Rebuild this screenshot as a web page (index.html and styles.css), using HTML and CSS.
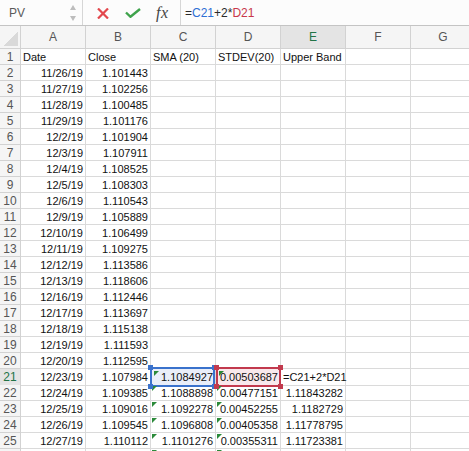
FILE: index.html
```html
<!DOCTYPE html>
<html>
<head>
<meta charset="utf-8">
<link rel="stylesheet" href="styles.css">
</head>
<body>
<div class="app">
  <div class="fbar">
    <div class="namebox">
      <span class="name">PV</span>
      <svg class="spin" width="8" height="18" viewBox="0 0 8 18"><path d="M4 1 L7 6 L1 6 Z" fill="#bdbdbd"/><path d="M1 12 L7 12 L4 17 Z" fill="#bdbdbd"/></svg>
    </div>
    <div class="tools">
      <svg class="x" width="12" height="11" viewBox="0 0 12 11"><path d="M1 0.5 L11 10.5 M11 0.5 L1 10.5" stroke="#e3484d" stroke-width="2.2" fill="none"/></svg>
      <svg class="ok" width="16" height="10" viewBox="0 0 16 10"><path d="M1 4.5 L5.5 8.8 L15 1" stroke="#3fa34c" stroke-width="2.4" fill="none"/></svg>
      <span class="fx">fx</span>
    </div>
    <div class="formula">=<span class="rb">C21</span>+2*<span class="rr">D21</span></div>
  </div>
  <div class="sheet">
    <div class="row hrow">
      <div class="c corner"><span class="tri"></span></div>
      <div class="c ch">A</div><div class="c ch">B</div><div class="c ch">C</div><div class="c ch">D</div><div class="c ch act">E</div><div class="c ch">F</div><div class="c ch">G</div>
    </div>
    <div class="row"><div class="c rh">1</div><div class="c">Date</div><div class="c">Close</div><div class="c">SMA (20)</div><div class="c">STDEV(20)</div><div class="c">Upper Band</div><div class="c"></div><div class="c"></div></div>
    <div class="row"><div class="c rh">2</div><div class="c n">11/26/19</div><div class="c n">1.101443</div><div class="c"></div><div class="c"></div><div class="c"></div><div class="c"></div><div class="c"></div></div>
    <div class="row"><div class="c rh">3</div><div class="c n">11/27/19</div><div class="c n">1.102256</div><div class="c"></div><div class="c"></div><div class="c"></div><div class="c"></div><div class="c"></div></div>
    <div class="row"><div class="c rh">4</div><div class="c n">11/28/19</div><div class="c n">1.100485</div><div class="c"></div><div class="c"></div><div class="c"></div><div class="c"></div><div class="c"></div></div>
    <div class="row"><div class="c rh">5</div><div class="c n">11/29/19</div><div class="c n">1.101176</div><div class="c"></div><div class="c"></div><div class="c"></div><div class="c"></div><div class="c"></div></div>
    <div class="row"><div class="c rh">6</div><div class="c n">12/2/19</div><div class="c n">1.101904</div><div class="c"></div><div class="c"></div><div class="c"></div><div class="c"></div><div class="c"></div></div>
    <div class="row"><div class="c rh">7</div><div class="c n">12/3/19</div><div class="c n">1.107911</div><div class="c"></div><div class="c"></div><div class="c"></div><div class="c"></div><div class="c"></div></div>
    <div class="row"><div class="c rh">8</div><div class="c n">12/4/19</div><div class="c n">1.108525</div><div class="c"></div><div class="c"></div><div class="c"></div><div class="c"></div><div class="c"></div></div>
    <div class="row"><div class="c rh">9</div><div class="c n">12/5/19</div><div class="c n">1.108303</div><div class="c"></div><div class="c"></div><div class="c"></div><div class="c"></div><div class="c"></div></div>
    <div class="row"><div class="c rh">10</div><div class="c n">12/6/19</div><div class="c n">1.110543</div><div class="c"></div><div class="c"></div><div class="c"></div><div class="c"></div><div class="c"></div></div>
    <div class="row"><div class="c rh">11</div><div class="c n">12/9/19</div><div class="c n">1.105889</div><div class="c"></div><div class="c"></div><div class="c"></div><div class="c"></div><div class="c"></div></div>
    <div class="row"><div class="c rh">12</div><div class="c n">12/10/19</div><div class="c n">1.106499</div><div class="c"></div><div class="c"></div><div class="c"></div><div class="c"></div><div class="c"></div></div>
    <div class="row"><div class="c rh">13</div><div class="c n">12/11/19</div><div class="c n">1.109275</div><div class="c"></div><div class="c"></div><div class="c"></div><div class="c"></div><div class="c"></div></div>
    <div class="row"><div class="c rh">14</div><div class="c n">12/12/19</div><div class="c n">1.113586</div><div class="c"></div><div class="c"></div><div class="c"></div><div class="c"></div><div class="c"></div></div>
    <div class="row"><div class="c rh">15</div><div class="c n">12/13/19</div><div class="c n">1.118606</div><div class="c"></div><div class="c"></div><div class="c"></div><div class="c"></div><div class="c"></div></div>
    <div class="row"><div class="c rh">16</div><div class="c n">12/16/19</div><div class="c n">1.112446</div><div class="c"></div><div class="c"></div><div class="c"></div><div class="c"></div><div class="c"></div></div>
    <div class="row"><div class="c rh">17</div><div class="c n">12/17/19</div><div class="c n">1.113697</div><div class="c"></div><div class="c"></div><div class="c"></div><div class="c"></div><div class="c"></div></div>
    <div class="row"><div class="c rh">18</div><div class="c n">12/18/19</div><div class="c n">1.115138</div><div class="c"></div><div class="c"></div><div class="c"></div><div class="c"></div><div class="c"></div></div>
    <div class="row"><div class="c rh">19</div><div class="c n">12/19/19</div><div class="c n">1.111593</div><div class="c"></div><div class="c"></div><div class="c"></div><div class="c"></div><div class="c"></div></div>
    <div class="row"><div class="c rh">20</div><div class="c n">12/20/19</div><div class="c n">1.112595</div><div class="c"></div><div class="c"></div><div class="c"></div><div class="c"></div><div class="c"></div></div>
    <div class="row"><div class="c rh act">21</div><div class="c n">12/23/19</div><div class="c n">1.107984</div><div class="c n tri-g selb"><span class="h tl"></span><span class="h tr"></span><span class="h bl"></span><span class="h br"></span>1.1084927</div><div class="c n tri-g selr"><span class="h tl"></span><span class="h tr"></span><span class="h bl"></span><span class="h br"></span>0.00503687</div><div class="c ovf">=C21+2*D21</div><div class="c"></div><div class="c"></div></div>
    <div class="row"><div class="c rh">22</div><div class="c n">12/24/19</div><div class="c n">1.109385</div><div class="c n tri-g">1.1088898</div><div class="c n tri-g">0.00477151</div><div class="c n">1.11843282</div><div class="c"></div><div class="c"></div></div>
    <div class="row"><div class="c rh">23</div><div class="c n">12/25/19</div><div class="c n">1.109016</div><div class="c n tri-g">1.1092278</div><div class="c n tri-g">0.00452255</div><div class="c n">1.1182729</div><div class="c"></div><div class="c"></div></div>
    <div class="row"><div class="c rh">24</div><div class="c n">12/26/19</div><div class="c n">1.109545</div><div class="c n tri-g">1.1096808</div><div class="c n tri-g">0.00405358</div><div class="c n">1.11778795</div><div class="c"></div><div class="c"></div></div>
    <div class="row"><div class="c rh">25</div><div class="c n">12/27/19</div><div class="c n">1.110112</div><div class="c n tri-g">1.1101276</div><div class="c n tri-g">0.00355311</div><div class="c n">1.11723381</div><div class="c"></div><div class="c"></div></div>
    <div class="row"><div class="c rh"></div><div class="c"></div><div class="c"></div><div class="c tri-g"></div><div class="c tri-g"></div><div class="c"></div><div class="c"></div><div class="c"></div></div>
  </div>
</div>
</body>
</html>
```
FILE: styles.css
```css
html, body {
  margin: 0;
  padding: 0;
  background: #ffffff;
  overflow: hidden;
}
.app {
  width: 469px;
  height: 451px;
  overflow: hidden;
  font-family: "Liberation Sans", Arial, sans-serif;
}
.fbar {
  display: flex;
  align-items: stretch;
  height: 25px;
  background: #fcfcfc;
  border-bottom: 1px solid #c4c4c4;
}
.namebox {
  width: 83px;
  display: flex;
  align-items: center;
  justify-content: space-between;
  padding: 0 5px 0 9px;
  box-sizing: border-box;
  border-right: 1px solid #d6d6d6;
}
.name {
  font-size: 12px;
  color: #5a5a5a;
}
.spin {
  display: block;
}
.tools {
  width: 98px;
  display: flex;
  align-items: center;
  padding-left: 14px;
  box-sizing: border-box;
  border-right: 1px solid #d6d6d6;
}
.x { display: block; margin-right: 16px; margin-top: 1px; }
.ok { display: block; margin-right: 15px; margin-top: 1px; }
.fx {
  font-family: "Liberation Serif", "DejaVu Serif", serif;
  font-style: italic;
  font-size: 16px;
  color: #444;
  letter-spacing: 0.5px;
}
.formula {
  display: flex;
  align-items: center;
  padding-left: 4px;
  font-size: 12px;
  color: #2a2a2a;
}
.rb { color: #2e6fd4; }
.rr { color: #c8374b; }

.sheet {
  width: 476px;
}
.row {
  display: grid;
  grid-template-columns: 21px repeat(7, 65px);
  height: 16px;
}
.c {
  box-sizing: border-box;
  border-right: 1px solid #dadada;
  border-bottom: 1px solid #dadada;
  padding: 0 2px;
  font-size: 11px;
  line-height: 16px;
  color: #111;
  white-space: nowrap;
  overflow: hidden;
  position: relative;
}
.n { text-align: right; }
.ovf { overflow: visible; }
.hrow {
  height: 23px;
}
.hrow .c {
  background: #f5f5f5;
  border-color: #d2d2d2;
  line-height: 22px;
  font-size: 12px;
  color: #555;
  text-align: center;
}
.hrow .c.act {
  background: #e4e4e4;
  color: #217346;
}
.corner {
  display: flex;
  align-items: flex-end;
  justify-content: flex-end;
  padding: 0 2px 2px 0 !important;
}
.tri {
  display: block;
  width: 14px;
  height: 15px;
  background: linear-gradient(to bottom right, transparent 50%, #d9d9d9 50%);
}
.rh {
  background: #f5f5f5;
  border-color: #d2d2d2;
  text-align: center;
  color: #555;
  font-size: 12px;
  padding: 0;
}
.rh.act {
  background: #e4e4e4;
  color: #217346;
}
.tri-g::after {
  content: "";
  position: absolute;
  left: 1px;
  top: 1px;
  width: 0;
  height: 0;
  border-top: 5px solid #2b8a3a;
  border-right: 5px solid transparent;
}
.selb, .selr { overflow: visible; }
.selb { background: #e9eef9; }
.selr { background: #f8e9ec; }
.selb::before, .selr::before {
  content: "";
  position: absolute;
  left: -1px;
  top: -2px;
  right: 0px;
  bottom: -2px;
  border: 2px solid #3a72cc;
  pointer-events: none;
}
.selr::before {
  border-color: #c23a4e;
  left: 0px;
  right: -1px;
}
.selb::after, .selr::after {
  left: 3px;
  top: 2px;
}
.h {
  position: absolute;
  width: 5px;
  height: 5px;
  background: #3a72cc;
  z-index: 2;
}
.selr .h { background: #c23a4e; }
.h.tl { left: -3px; top: -4px; }
.h.tr { right: -2px; top: -4px; }
.h.bl { left: -3px; bottom: -4px; }
.h.br { right: -2px; bottom: -4px; }
.selr .h.tl, .selr .h.bl { left: -2px; }
.selr .h.tr, .selr .h.br { right: -3px; }
```
